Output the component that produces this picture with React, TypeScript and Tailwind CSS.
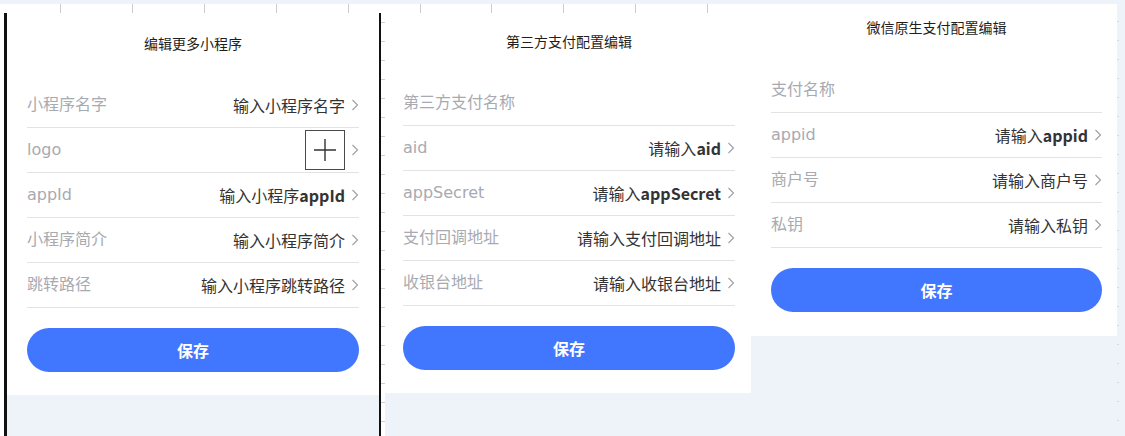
import type { ReactNode } from "react";

type Field = {
  label: string;
  value?: ReactNode;
  logo?: boolean;
};

const miniFields: Field[] = [
  { label: "小程序名字", value: "输入小程序名字" },
  { label: "logo", logo: true },
  { label: "appId", value: <>输入小程序<span className="font-bold">appId</span></> },
  { label: "小程序简介", value: "输入小程序简介" },
  { label: "跳转路径", value: "输入小程序跳转路径" },
];

const thirdPartyFields: Field[] = [
  { label: "第三方支付名称" },
  { label: "aid", value: <>请输入<span className="font-bold">aid</span></> },
  { label: "appSecret", value: <>请输入<span className="font-bold">appSecret</span></> },
  { label: "支付回调地址", value: "请输入支付回调地址" },
  { label: "收银台地址", value: "请输入收银台地址" },
];

const wechatFields: Field[] = [
  { label: "支付名称" },
  { label: "appid", value: <>请输入<span className="font-bold">appid</span></> },
  { label: "商户号", value: "请输入商户号" },
  { label: "私钥", value: "请输入私钥" },
];

const topTicks = Array.from({ length: 10 }, (_, i) => Math.round(60 + i * 71.9));
const sideTicks = Array.from({ length: 22 }, (_, i) => i);

function Chevron() {
  return (
    <svg width="8" height="14" viewBox="0 0 8 14" className="shrink-0">
      <path d="M1.5 2 L6.5 7 L1.5 12" fill="none" stroke="#9c9ea5" strokeWidth="1.1" />
    </svg>
  );
}

function LogoBox() {
  return (
    <div className="flex h-[40px] w-[40px] items-center justify-center border border-[#4a4a4a]">
      <svg width="24" height="24" viewBox="0 0 24 24">
        <path d="M12 1 V23 M1 12 H23" stroke="#333" strokeWidth="1.4" fill="none" />
      </svg>
    </div>
  );
}

function FieldRow({ field }: { field: Field }) {
  return (
    <div className="flex h-[45px] items-center justify-between border-b border-[#e3e3e5]">
      <span className="text-[16px] text-[#a8aab1]">{field.label}</span>
      {field.value || field.logo ? (
        <div className="flex items-center gap-[6px]">
          {field.logo ? (
            <LogoBox />
          ) : (
            <span className="font-['Noto_Sans_CJK_SC',sans-serif] text-[16px] text-[#333]">
              {field.value}
            </span>
          )}
          <Chevron />
        </div>
      ) : null}
    </div>
  );
}

function Panel({
  title,
  fields,
  className,
  titleClassName,
  listClassName,
}: {
  title: string;
  fields: Field[];
  className: string;
  titleClassName: string;
  listClassName: string;
}) {
  return (
    <div className={`flex shrink-0 flex-col bg-white ${className}`}>
      <h2
        className={`h-[20px] text-center font-['Noto_Sans_CJK_SC',sans-serif] text-[14px] leading-[20px] text-[#1e1e1e] ${titleClassName}`}
      >
        {title}
      </h2>
      <div className={listClassName}>
        {fields.map((field) => (
          <FieldRow key={field.label} field={field} />
        ))}
      </div>
      <button
        type="button"
        className="mt-[20px] h-[44px] w-full rounded-full bg-[#4176ff] font-['Noto_Sans_CJK_SC',sans-serif] text-[16px] font-bold text-white"
      >
        保存
      </button>
    </div>
  );
}

export default function App() {
  return (
    <div className="relative h-[436px] w-[1125px] overflow-hidden bg-[#eef3f9] pt-[4px] font-['DejaVu_Sans','Noto_Sans_CJK_SC',sans-serif]">
      <div className="flex h-full items-start">
        <div className="h-full w-[4px] shrink-0 bg-white" />
        <div className="h-full w-[3px] shrink-0 bg-white pt-[9px]">
          <div className="h-full bg-[#111]" />
        </div>

        <Panel
          title="编辑更多小程序"
          fields={miniFields}
          className="h-[391px] w-[372px] px-[20px] pt-[29px]"
          titleClassName=""
          listClassName="mt-[30px]"
        />

        <div className="h-full w-[2px] shrink-0 bg-white pt-[9px]">
          <div className="h-full bg-[#111]" />
        </div>
        <div className="flex h-full w-[4px] shrink-0 flex-col gap-[18px] bg-white pt-[18px]">
          {sideTicks.map((i) => (
            <div key={i} className="h-px w-[4px] shrink-0 bg-[#cfcfcf]" />
          ))}
        </div>

        <Panel
          title="第三方支付配置编辑"
          fields={thirdPartyFields}
          className="h-[389px] w-[366px] pl-[18px] pr-[16px] pt-[27px]"
          titleClassName=""
          listClassName="mt-[30px]"
        />

        <Panel
          title="微信原生支付配置编辑"
          fields={wechatFields}
          className="h-[332px] w-[366px] pl-[20px] pr-[15px] pt-[13px]"
          titleClassName=""
          listClassName="mt-[31px]"
        />

        <div className="flex h-full w-[8px] shrink-0 flex-col gap-[18px] pt-[17px]">
          {sideTicks.map((i) => (
            <div key={i} className="h-px w-[2px] shrink-0 bg-[#d4d8df]" />
          ))}
        </div>
      </div>

      <div className="pointer-events-none absolute left-0 top-[4px] h-[9px] w-[751px]">
        {topTicks.map((x) => (
          <div key={x} className="absolute top-0 h-[9px] w-px bg-[#cdcdcd]" style={{ left: x }} />
        ))}
      </div>
    </div>
  );
}
